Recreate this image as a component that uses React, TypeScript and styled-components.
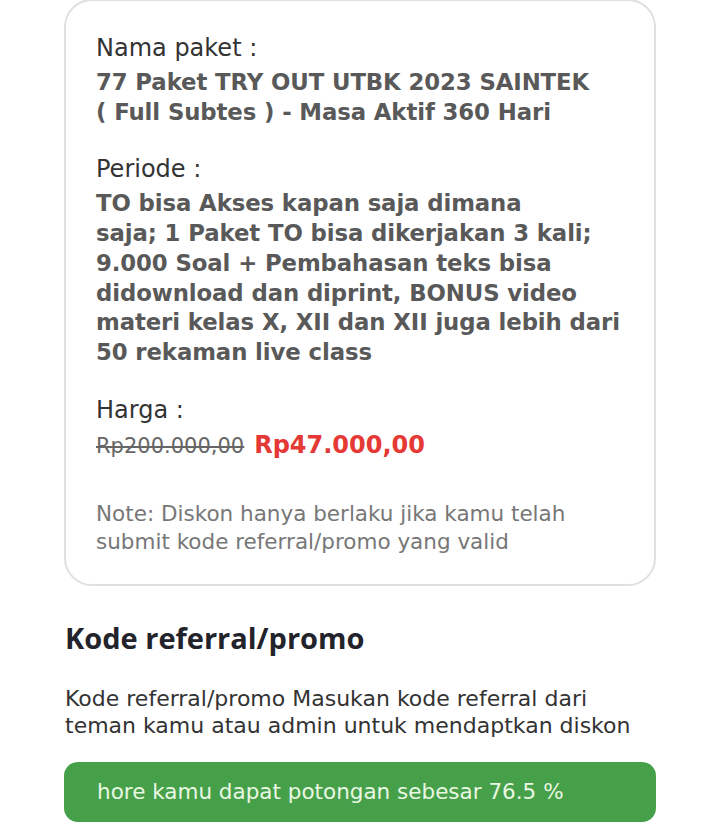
import * as React from 'react'
import styled, { createGlobalStyle } from 'styled-components'

const GlobalStyle = createGlobalStyle`
  html, body {
    margin: 0;
    padding: 0;
    background: #ffffff;
  }
  body {
    font-family: "DejaVu Sans", "Noto Sans", sans-serif;
  }
`

function App() {
  return (
    <>
      <GlobalStyle />
      <Page>
        <Card>
          <Section>
            <Label>Nama paket :</Label>
            <Value>
              77 Paket TRY OUT UTBK 2023 SAINTEK
              <br />( Full Subtes ) - Masa Aktif 360 Hari
            </Value>
          </Section>
          <Section>
            <Label>Periode :</Label>
            <Value>
              TO bisa Akses kapan saja dimana
              <br />saja; 1 Paket TO bisa dikerjakan 3 kali;
              <br />9.000 Soal + Pembahasan teks bisa
              <br />didownload dan diprint, BONUS video
              <br />materi kelas X, XII dan XII juga lebih dari
              <br />50 rekaman live class
            </Value>
          </Section>
          <Section>
            <Label>Harga :</Label>
            <PriceRow>
              <OldPrice>Rp200.000,00</OldPrice>
              <NewPrice>Rp47.000,00</NewPrice>
            </PriceRow>
          </Section>
          <Note>
            Note: Diskon hanya berlaku jika kamu telah
            <br />submit kode referral/promo yang valid
          </Note>
        </Card>

        <Heading>Kode referral/promo</Heading>
        <Description>
          Kode referral/promo Masukan kode referral dari
          <br />teman kamu atau admin untuk mendaptkan diskon
        </Description>
        <SuccessBar>hore kamu dapat potongan sebesar 76.5 %</SuccessBar>
      </Page>
    </>
  )
}

const Page = styled.main`
  padding: 0 64px 0 64px;
  display: flex;
  flex-direction: column;
`

const Card = styled.section`
  margin-top: -1px;
  border: 2px solid #e0e0e0;
  border-radius: 28px;
  padding: 32px 30px 28px 30px;
  display: flex;
  flex-direction: column;
  gap: 27px;
`

const Section = styled.div`
  display: flex;
  flex-direction: column;
  gap: 5px;
`

const Label = styled.div`
  font-size: 24px;
  line-height: 30px;
  color: #333333;
`

const Value = styled.div`
  font-size: 22.8px;
  font-weight: 700;
  line-height: 29.7px;
  color: #595959;
  white-space: nowrap;
  letter-spacing: -0.1px;
`

const PriceRow = styled.div`
  display: flex;
  align-items: baseline;
  gap: 10px;
  line-height: 30px;
`

const OldPrice = styled.span`
  font-size: 21px;
  color: #666666;
  text-decoration: line-through;
`

const NewPrice = styled.span`
  font-size: 24px;
  font-weight: 700;
  color: #e53935;
`

const Note = styled.div`
  margin-top: 12px;
  font-size: 21.5px;
  line-height: 28px;
  color: #777777;
  white-space: nowrap;
`

const Heading = styled.h2`
  margin: 34px 0 0 1px;
  font-family: "Open Sans", "Noto Sans", sans-serif;
  font-size: 29px;
  font-weight: 700;
  line-height: 36px;
  color: #23232b;
`

const Description = styled.p`
  margin: 29px 0 0 1px;
  font-size: 22px;
  line-height: 27px;
  color: #333333;
  white-space: nowrap;
`

const SuccessBar = styled.div`
  margin-top: 23px;
  height: 60px;
  border-radius: 14px;
  background: #46a049;
  color: #e9f7e3;
  font-size: 21.5px;
  display: flex;
  align-items: center;
  padding: 0 33px;
`

export default App
